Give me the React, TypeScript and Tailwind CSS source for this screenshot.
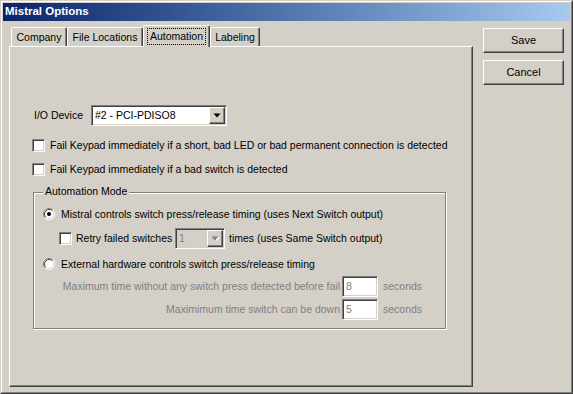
import React from "react";

const sunken =
  "border border-t-[#808080] border-l-[#808080] border-r-white border-b-white shadow-[inset_1px_1px_0_#404040,inset_-1px_-1px_0_#d4d0c8]";
const raised =
  "border border-t-white border-l-white border-r-[#404040] border-b-[#404040] shadow-[inset_-1px_-1px_0_#808080]";

function Checkbox() {
  return <div className={`w-[13px] h-[13px] shrink-0 bg-white ${sunken}`} />;
}

function Radio({ checked }: { checked?: boolean }) {
  return (
    <svg width="12" height="12" viewBox="0 0 12 12" className="shrink-0">
      <circle cx="6" cy="6" r="5.5" fill="#ffffff" />
      <path d="M 2.11 9.89 A 5.5 5.5 0 0 1 9.89 2.11" stroke="#808080" strokeWidth="1" fill="none" />
      <path d="M 9.89 2.11 A 5.5 5.5 0 0 1 2.11 9.89" stroke="#ffffff" strokeWidth="1" fill="none" />
      <path d="M 2.82 9.18 A 4.5 4.5 0 0 1 9.18 2.82" stroke="#404040" strokeWidth="1" fill="none" />
      <path d="M 9.18 2.82 A 4.5 4.5 0 0 1 2.82 9.18" stroke="#d4d0c8" strokeWidth="1" fill="none" />
      {checked && <circle cx="6" cy="6" r="2" fill="#000000" />}
    </svg>
  );
}

function Arrow({ disabled }: { disabled?: boolean }) {
  return (
    <svg width="8" height="5" viewBox="0 0 8 5">
      {disabled && <path d="M2 1h7l-3.5 4z" fill="#ffffff" />}
      <path d="M0.5 0.5h7l-3.5 4z" fill={disabled ? "#808080" : "#000000"} />
    </svg>
  );
}

function Combo({ value, width, disabled }: { value: string; width: string; disabled?: boolean }) {
  return (
    <div
      className={`${width} h-[21px] shrink-0 p-px flex items-stretch ${sunken} ${
        disabled ? "bg-[#d4d0c8] text-[#808080]" : "bg-white text-black"
      }`}
    >
      <span className="flex-1 flex items-center pl-[2px] leading-none">{value}</span>
      <div className={`w-[16px] bg-[#d4d0c8] flex items-center justify-center ${raised}`}>
        <Arrow disabled={disabled} />
      </div>
    </div>
  );
}

function Tab({ label, width, selected }: { label: string; width: string; selected?: boolean }) {
  if (selected) {
    return (
      <div
        className={`${width} h-[22px] -mb-px z-10 bg-[#d4d0c8] border-t border-l border-r border-t-white border-l-white border-r-[#404040] shadow-[inset_-1px_0_0_#808080] rounded-t-[2px] flex items-start justify-center pt-[2px]`}
      >
        <span className="h-[17px] px-[3px] flex items-center leading-none outline outline-1 outline-dotted outline-black -outline-offset-1">
          {label}
        </span>
      </div>
    );
  }
  return (
    <div
      className={`${width} h-[19px] bg-[#d4d0c8] border-t border-l border-r border-t-white border-l-white border-r-[#404040] shadow-[inset_-1px_0_0_#808080] rounded-t-[2px] flex items-center justify-center leading-none pt-[1px]`}
    >
      {label}
    </div>
  );
}

function Button({ label }: { label: string }) {
  return (
    <div className={`w-[81px] h-[25px] bg-[#d4d0c8] flex items-center justify-center leading-none text-[11px] ${raised}`}>
      {label}
    </div>
  );
}

export default function App() {
  return (
    <div className="w-[573px] h-[394px] bg-[#d4d0c8] border border-t-[#d4d0c8] border-l-[#d4d0c8] border-r-[#404040] border-b-[#404040] font-['Liberation_Sans',Arial,sans-serif] text-[10.5px] text-black select-none whitespace-nowrap">
      <div className="h-full border border-t-white border-l-white border-r-[#808080] border-b-[#808080] p-px flex flex-col">
        <div className="h-[18px] shrink-0 bg-gradient-to-r from-[#0a246a] to-[#a6caf0] flex items-center pl-[2px] text-white font-bold text-[11.5px] leading-none">
          Mistral Options
        </div>
        <div className="flex flex-1">
          <div className="ml-[6px] mt-[4px] w-[464px] flex flex-col">
            <div className="h-[21px] flex items-end pl-[2px]">
              <Tab label="Company" width="w-[56px]" />
              <Tab label="File Locations" width="w-[76px]" />
              <Tab label="Automation" width="w-[67px]" selected />
              <Tab label="Labeling" width="w-[50px]" />
            </div>
            <div className="h-[341px] border border-t-white border-l-white border-r-[#404040] border-b-[#404040] shadow-[inset_-1px_-1px_0_#808080] flex flex-col pl-[22px]">
              <div className="mt-[58px] h-[21px] flex items-center">
                <span className="w-[59px] pl-[2px] leading-none">I/O Device</span>
                <Combo value="#2 - PCI-PDISO8" width="w-[136px]" />
              </div>
              <div className="mt-[13px] h-[13px] flex items-center gap-[5px]">
                <Checkbox />
                <span className="leading-none">
                  Fail Keypad immediately if a short, bad LED or bad permanent connection is detected
                </span>
              </div>
              <div className="mt-[11px] h-[13px] flex items-center gap-[5px]">
                <Checkbox />
                <span className="leading-none">Fail Keypad immediately if a bad switch is detected</span>
              </div>
              <div className="relative mt-[16px] ml-px w-[413px] h-[137px] border border-[#808080] shadow-[inset_1px_1px_0_#ffffff,1px_1px_0_#ffffff] flex flex-col">
                <span className="absolute left-[9px] -top-[7px] bg-[#d4d0c8] px-[2px] leading-none">
                  Automation Mode
                </span>
                <div className="mt-[15px] ml-[9px] h-[12px] flex items-center gap-[6px]">
                  <Radio checked />
                  <span className="leading-none">
                    Mistral controls switch press/release timing (uses Next Switch output)
                  </span>
                </div>
                <div className="mt-[8px] ml-[25px] h-[21px] flex items-center">
                  <Checkbox />
                  <span className="w-[103px] pl-[4px] leading-none">Retry failed switches</span>
                  <Combo value="1" width="w-[50px]" disabled />
                  <span className="ml-[4px] leading-none">times (uses Same Switch output)</span>
                </div>
                <div className="mt-[9px] ml-[9px] h-[12px] flex items-center gap-[6px]">
                  <Radio />
                  <span className="leading-none">External hardware controls switch press/release timing</span>
                </div>
                <div className="mt-[6px] h-[21px] flex items-center text-[#808080]">
                  <span className="w-[306px] text-right leading-none">
                    Maximum time without any switch press detected before fail
                  </span>
                  <div className={`ml-[2px] w-[36px] h-[21px] bg-white flex items-center pl-[3px] leading-none ${sunken}`}>
                    8
                  </div>
                  <span className="ml-[5px] leading-none">seconds</span>
                </div>
                <div className="mt-[2px] h-[21px] flex items-center text-[#808080]">
                  <span className="w-[306px] text-right leading-none">Maximimum time switch can be down</span>
                  <div className={`ml-[2px] w-[36px] h-[21px] bg-white flex items-center pl-[3px] leading-none ${sunken}`}>
                    5
                  </div>
                  <span className="ml-[5px] leading-none">seconds</span>
                </div>
              </div>
            </div>
          </div>
          <div className="ml-[10px] mt-[7px] flex flex-col gap-[7px]">
            <Button label="Save" />
            <Button label="Cancel" />
          </div>
        </div>
      </div>
    </div>
  );
}
